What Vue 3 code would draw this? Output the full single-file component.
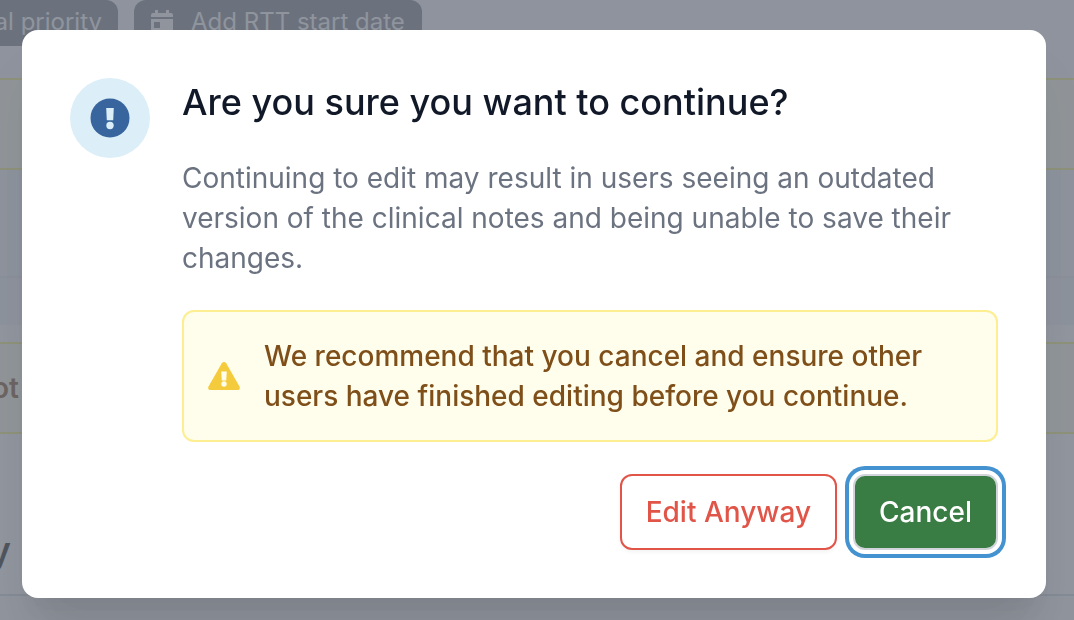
<script setup>
import { ref } from 'vue'

const open = ref(true)
</script>

<template>
  <div class="screen">
    <main class="page">
      <div class="toolbar">
        <button class="chip chip-first" type="button">al priority</button>
        <button class="chip" type="button">
          <svg class="calendar" viewBox="0 0 22 24" aria-hidden="true">
            <path fill-rule="evenodd" d="M4 0h3v3h8V0h3v3h2a2 2 0 0 1 2 2v2H0V5a2 2 0 0 1 2-2h2zM0 9h22v13a2 2 0 0 1-2 2H2a2 2 0 0 1-2-2zm3 3v6h6v-6z" />
          </svg>
          <span>Add RTT start date</span>
        </button>
      </div>
      <div class="band"></div>
      <div class="block"></div>
      <div class="strip"></div>
      <div class="lower">
        <div class="band"><span class="band-text">ot</span></div>
        <h1 class="heading"><span>y</span></h1>
      </div>
    </main>

    <div v-if="open" class="backdrop">
      <section class="dialog" role="alertdialog" aria-modal="true" aria-labelledby="dialog-title" aria-describedby="dialog-text">
        <div class="badge">
          <svg viewBox="0 0 40 40" aria-hidden="true">
            <circle cx="20" cy="20" r="19.5" fill="#38659d" />
            <path d="M16.2 10h7.6l-.6 12.3h-6.4z" fill="#dceef8" />
            <circle cx="20" cy="27.5" r="3.7" fill="#dceef8" />
          </svg>
        </div>
        <div class="content">
          <h2 id="dialog-title">Are you sure you want to continue?</h2>
          <p id="dialog-text" class="text">
            Continuing to edit may result in users seeing an outdated version of the clinical notes and being unable to save their changes.
          </p>
          <div class="notice">
            <svg viewBox="0 0 32 28" aria-hidden="true">
              <path d="M13.8 1.2Q16-1.1 18.2 1.2L31.5 24.5Q32.8 27.7 29.5 28.2H2.5Q-.8 27.7.5 24.5z" fill="#f5cb3e" />
              <path d="M13.2 9.5h5.6l-.6 9h-4.4z" fill="#fffdeb" />
              <circle cx="16" cy="22" r="2.7" fill="#fffdeb" />
            </svg>
            <p>We recommend that you cancel and ensure other users have finished editing before you continue.</p>
          </div>
          <div class="actions">
            <button class="btn danger" type="button" @click="open = false">Edit Anyway</button>
            <button class="btn primary" type="button" @click="open = false">Cancel</button>
          </div>
        </div>
      </section>
    </div>
  </div>
</template>

<style>
body {
  margin: 0;
}
</style>

<style scoped>
.screen,
.screen * {
  box-sizing: border-box;
}

.screen {
  font-family: Inter, "Liberation Sans", sans-serif;
  font-size: 28px;
  line-height: 40px;
}

.page {
  height: 100vh;
  overflow: hidden;
  background: #f9fafb;
}

.toolbar {
  display: flex;
  gap: 16px;
  height: 78px;
  align-items: flex-start;
  background: #f7f8fb;
}

.chip {
  display: flex;
  flex: none;
  align-items: center;
  gap: 18px;
  height: 46px;
  padding: 0 17px 2px;
  border: 0;
  border-radius: 12px;
  background: #6b717c;
  color: #f9fafb;
  font: 400 24px/40px Inter, "Liberation Sans", sans-serif;
  white-space: nowrap;
}

.chip-first {
  justify-content: flex-end;
  width: 118px;
  padding: 0 16px 2px 0;
  border-radius: 0 12px 0 0;
}

.calendar {
  width: 22px;
  height: 24px;
  fill: currentColor;
}

.band {
  display: flex;
  align-items: center;
  height: 92px;
  border: solid #f5f070;
  border-width: 2px 0;
  background: #fdfce8;
  color: #713f12;
  font-weight: 600;
}

.band-text {
  display: flex;
  justify-content: flex-end;
  width: 19px;
}

.block {
  height: 108px;
  border-bottom: 2px solid #e5e7eb;
  background: #f3f4f8;
}

.strip {
  height: 47px;
  background: #f0f2f8;
}

.lower {
  padding-top: 17px;
  background: #fff;
}

.heading {
  display: flex;
  height: 162px;
  margin: 0;
  padding-top: 92px;
  border-bottom: 2px solid #d1d5db;
  color: #000;
  font-size: 36px;
  font-weight: 600;
  line-height: 48px;
}

.heading span {
  display: flex;
  justify-content: flex-end;
  width: 11px;
}

.backdrop {
  position: fixed;
  inset: 0;
  display: flex;
  align-items: flex-start;
  padding: 30px 28px 22px 22px;
  overflow: auto;
  background: rgba(107, 113, 125, 0.75);
}

.dialog {
  display: flex;
  flex: 1;
  align-items: flex-start;
  gap: 32px;
  padding: 48px;
  border-radius: 16px;
  background: #fff;
  box-shadow: 0 40px 50px -10px rgba(0, 0, 0, 0.1), 0 20px 20px -10px rgba(0, 0, 0, 0.04);
}

.badge {
  display: flex;
  flex: none;
  align-items: center;
  justify-content: center;
  width: 80px;
  height: 80px;
  border-radius: 50%;
  background: #dceef8;
}

.badge svg {
  width: 40px;
  height: 40px;
}

.content {
  flex: 1;
  min-width: 0;
}

h2 {
  margin: 0;
  color: #111827;
  font-size: 36px;
  font-weight: 500;
  line-height: 48px;
}

.text {
  margin: 32px 0;
  color: #6b7280;
}

.notice {
  display: flex;
  align-items: center;
  gap: 24px;
  padding: 24px;
  border: 2px solid #fdee91;
  border-radius: 12px;
  background: #fffdeb;
  color: #7f4f1a;
  font-weight: 500;
}

.notice svg {
  flex: none;
  width: 32px;
  height: 28px;
}

.notice p {
  margin: 0;
}

.actions {
  display: flex;
  justify-content: flex-end;
  gap: 16px;
  margin-top: 32px;
}

.btn {
  padding: 16px 24px;
  border: 2px solid;
  border-radius: 12px;
  font: 500 28px/40px Inter, "Liberation Sans", sans-serif;
}

.danger {
  border-color: #e15549;
  background: #fff;
  color: #e15549;
  box-shadow: 0 2px 4px rgba(0, 0, 0, 0.05);
}

.primary {
  border-color: #d1d5db;
  background: #3a7d44;
  color: #fff;
  box-shadow: 0 0 0 4px #fff, 0 0 0 8px #4493d0;
}
</style>
